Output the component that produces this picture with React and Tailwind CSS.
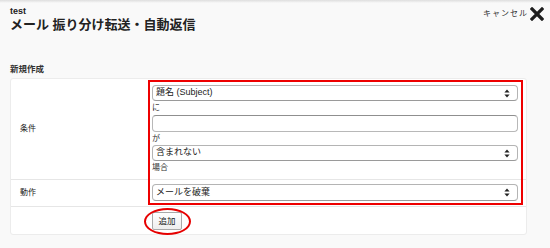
import React from "react";

const font = { fontFamily: '"Liberation Sans", "Noto Sans CJK JP", sans-serif' };

const Arrows = () => (
  <svg width="6" height="9" viewBox="0 0 6 9" className="shrink-0">
    <path d="M3 0.5 L5.6 3.6 L0.4 3.6 Z" fill="#222" />
    <path d="M3 8.5 L5.6 5.4 L0.4 5.4 Z" fill="#222" />
  </svg>
);

const Select = ({ value, h = "h-[16px]" }) => (
  <div className={`flex items-center justify-between ${h} rounded-[4px] border border-[#b4b4b4] border-b-[#9a9a9a] bg-white pl-[3px] pr-[7px] text-[9px] text-[#222]`}>
    <span>{value}</span>
    <Arrows />
  </div>
);

const Small = ({ children, h = "h-[14px]" }) => (
  <div className={`${h} flex items-center text-[8px] text-[#333]`}>{children}</div>
);

const App = () => {
  return (
    <div className="relative w-[550px] h-[248px] overflow-hidden bg-[#f9f9f9] text-[#222]" style={font}>
      <div className="h-[3px] bg-gradient-to-b from-[#dedede] to-[#f9f9f9]" />
      <div className="flex justify-between pl-[10px] pr-[6px]">
        <div>
          <div className="text-[9px] font-bold leading-[12px] mt-[2px]">test</div>
          <h1 className="text-[13px] font-bold leading-[16px]">メール 振り分け転送・自動返信</h1>
        </div>
        <div className="flex items-center gap-[2px] pt-[4px] self-start">
          <span className="text-[8px] tracking-[1px] text-[#333]">キャンセル</span>
          <svg width="14" height="14" viewBox="0 0 14 14">
            <path d="M2 2 L12 12 M12 2 L2 12" stroke="#1e1e1e" strokeWidth="3.2" strokeLinecap="square" />
          </svg>
        </div>
      </div>

      <div className="pl-[10px] mt-[30px] text-[8.5px] font-bold leading-[12px] text-[#333]">新規作成</div>

      <div className="relative ml-[10px] mt-[3px] w-[517px] h-[157px] rounded-[3px] border border-[#ececec] bg-white">
        <div className="flex h-[101px] border-b border-[#e6e6e6]">
          <div className="w-[137px] flex items-center pl-[9px] text-[8px] text-[#222]">条件</div>
          <div className="flex-1 pt-[6px] pl-[4px] pr-[8px]">
            <Select value="題名 (Subject)" />
            <Small>に</Small>
            <div className="h-[17px] rounded-[4px] border border-[#b8b8b8] border-t-[#8f8f8f] bg-white" />
            <Small h="h-[13px]">が</Small>
            <Select value="含まれない" />
            <Small>場合</Small>
          </div>
        </div>
        <div className="flex h-[27px] border-b border-[#e6e6e6]">
          <div className="w-[137px] flex items-center pl-[9px] text-[8px] text-[#222]">動作</div>
          <div className="flex-1 pt-[4px] pl-[4px] pr-[8px]">
            <Select value="メールを破棄" h="h-[17px]" />
          </div>
        </div>
        <div className="flex h-[28px] items-center pl-[141px]">
          <button className="h-[18px] w-[30px] rounded-[2px] border border-[#a9a9a9] bg-gradient-to-b from-white to-[#eeeeee] text-[8.5px] text-[#222]">
            追加
          </button>
        </div>

        <div className="absolute left-[137px] top-[1px] w-[375px] h-[125px] border-2 border-[#ee0000]" />
        <div className="absolute left-[133px] top-[129px] w-[47px] h-[27px] rounded-[50%] border-2 border-[#e60000]" />
      </div>
    </div>
  );
};

export default App;
